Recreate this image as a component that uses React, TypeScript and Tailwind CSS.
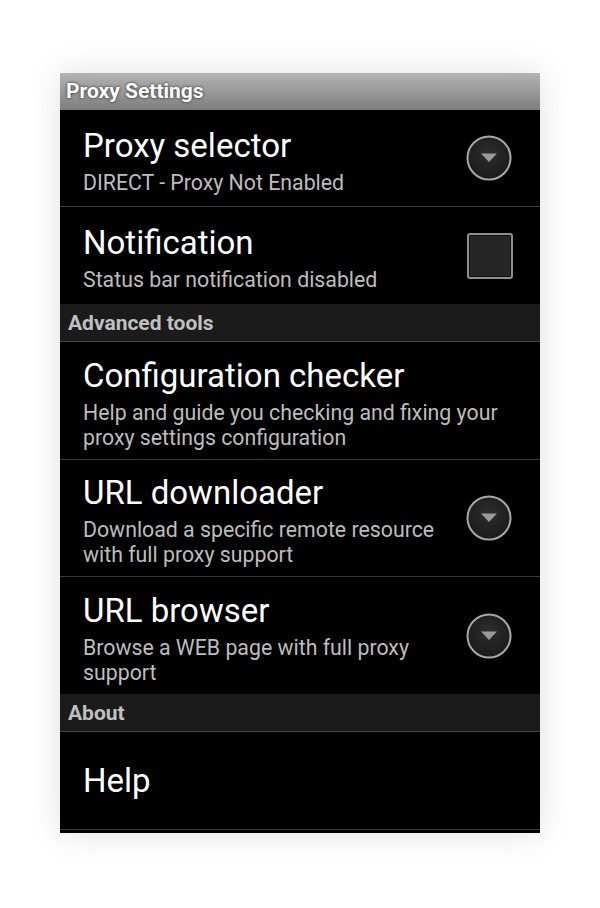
import React from "react";

const font = { fontFamily: "Roboto, 'Noto Sans', sans-serif" };

function DropButton() {
  return (
    <svg width="48" height="48" viewBox="0 0 48 48" className="shrink-0">
      <defs>
        <radialGradient id="g" cx="50%" cy="40%" r="60%">
          <stop offset="0%" stopColor="#2e2e2e" />
          <stop offset="100%" stopColor="#1a1a1a" />
        </radialGradient>
      </defs>
      <circle cx="24" cy="24" r="21.5" fill="url(#g)" stroke="#a8a8a8" strokeWidth="2" />
      <path d="M16 19.5 L32 19.5 L24 28 Z" fill="#9a9a9a" />
    </svg>
  );
}

function Checkbox() {
  return (
    <div className="w-[46px] h-[46px] shrink-0 rounded-[3px] border-2 border-[#8f8f8f] bg-[#262626] shadow-[inset_0_0_0_1px_#111]" />
  );
}

function Row({
  title,
  sub,
  h,
  right,
  border = true,
}: {
  title: string;
  sub?: string[];
  h: string;
  right?: React.ReactNode;
  border?: boolean;
}) {
  return (
    <div className={`flex items-center pl-[23px] pr-[27px] ${h} ${border ? "border-b border-[#3a3a3a]" : ""}`}>
      <div className="flex-1 min-w-0">
        <div className="text-[33px] leading-[48px] text-white whitespace-nowrap">{title}</div>
        {sub &&
          sub.map((s, i) => (
            <div key={i} className="text-[21.3px] leading-[25px] text-[#bdbdbd] whitespace-nowrap">
              {s}
            </div>
          ))}
      </div>
      {right}
    </div>
  );
}

function Header({ text }: { text: string }) {
  return (
    <div className="h-[38px] flex items-center pl-[8px] pt-[3px] bg-[#1b1b1b] border-b border-[#444]">
      <span className="text-[21px] font-bold text-[#c0c0c0]">{text}</span>
    </div>
  );
}

export default function App() {
  return (
    <div className="w-[600px] h-[908px] bg-white pt-[73px] pl-[60px]" style={font}>
      <div className="w-[480px] h-[760px] bg-black shadow-[0_0_32px_rgba(0,0,0,0.12)] overflow-hidden flex flex-col">
        <div className="h-[37px] flex items-center pl-[6px] bg-gradient-to-b from-[#b4b4b4] to-[#7e7e7e]">
          <span className="text-[21px] font-bold text-white [text-shadow:0_0_3px_rgba(0,0,0,0.8)]">Proxy Settings</span>
        </div>
        <Row title="Proxy selector" sub={["DIRECT - Proxy Not Enabled"]} h="h-[97px]" right={<DropButton />} />
        <Row
          title="Notification"
          sub={["Status bar notification disabled"]}
          h="h-[97px]"
          border={false}
          right={<Checkbox />}
        />
        <Header text="Advanced tools" />
        <Row
          title="Configuration checker"
          sub={["Help and guide you checking and fixing your", "proxy settings configuration"]}
          h="h-[118px]"
        />
        <Row
          title="URL downloader"
          sub={["Download a specific remote resource", "with full proxy support"]}
          h="h-[117px]"
          right={<DropButton />}
        />
        <Row
          title="URL browser"
          sub={["Browse a WEB page with full proxy", "support"]}
          h="h-[117px]"
          border={false}
          right={<DropButton />}
        />
        <Header text="About" />
        <Row title="Help" h="h-[98px]" border={true} />
      </div>
    </div>
  );
}
